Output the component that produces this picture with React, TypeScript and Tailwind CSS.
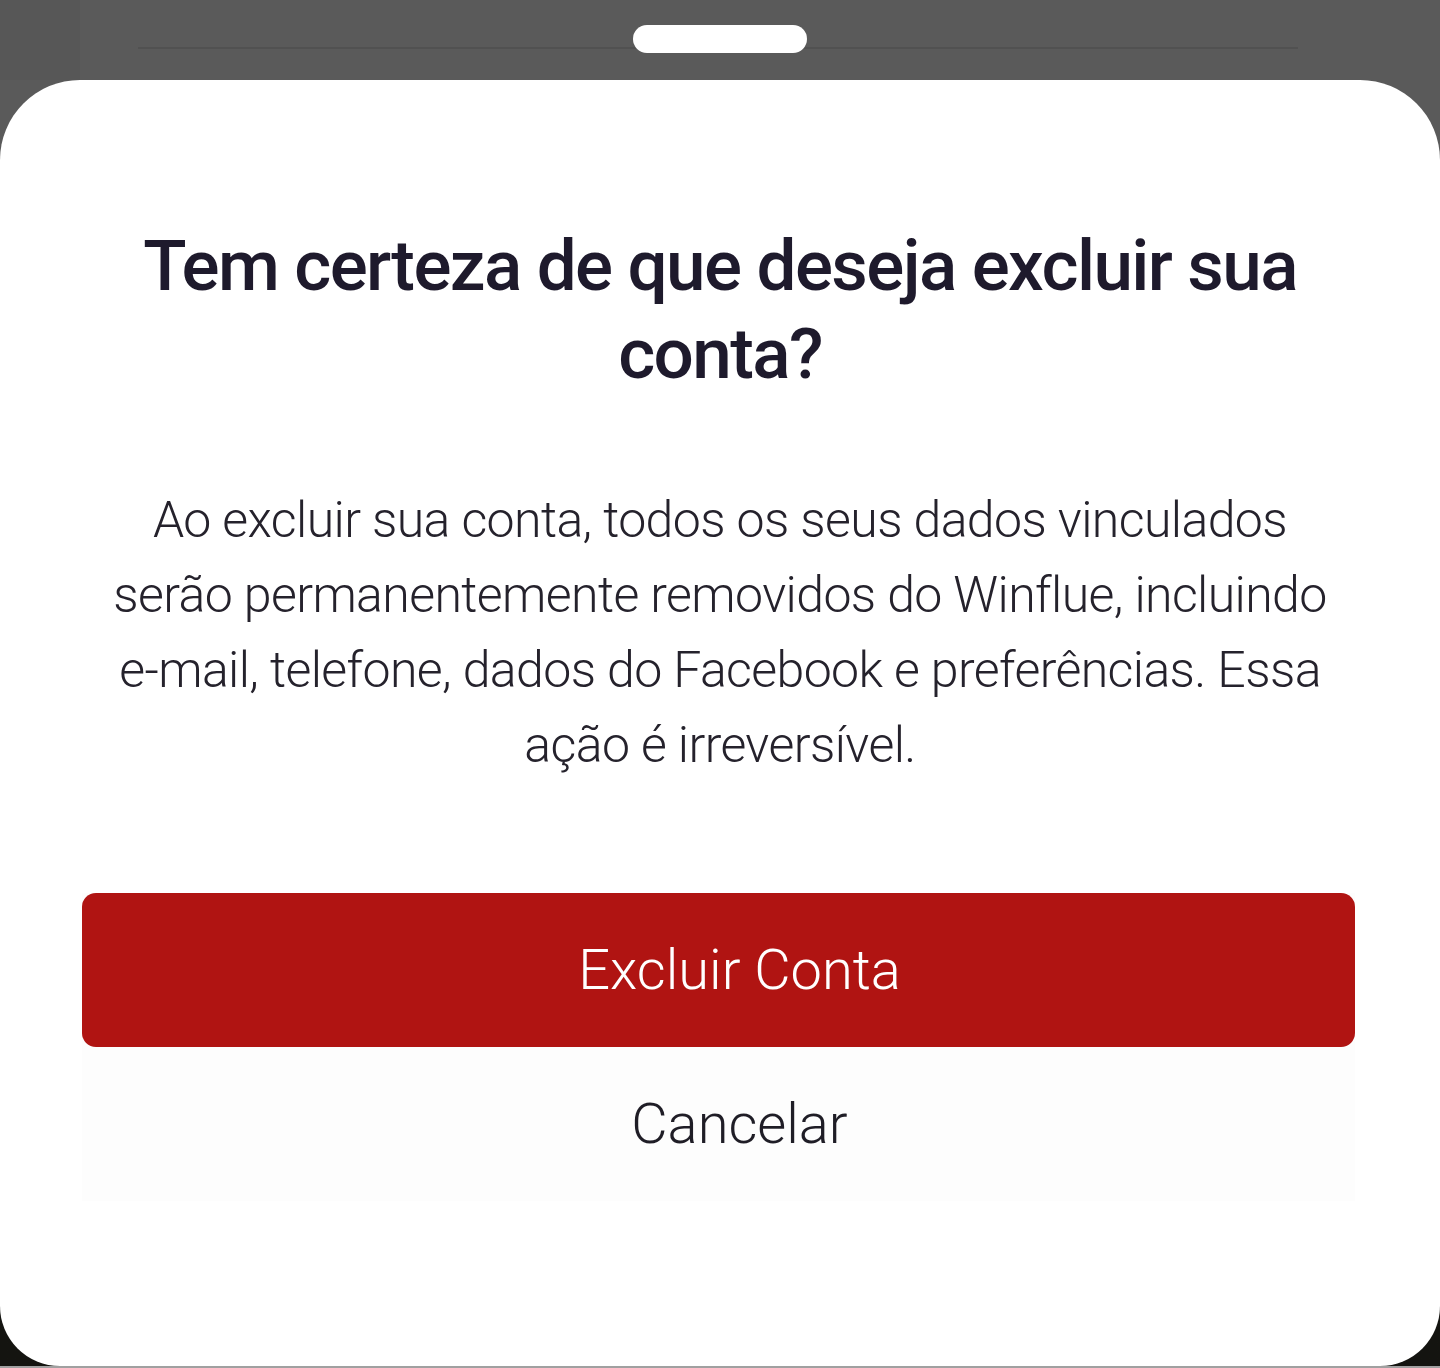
export default function App() {
  return (
    <div className="flex h-[1368px] w-[1440px] flex-col bg-[#5a5a5a] font-['Roboto',sans-serif]">
      {/* top strip behind the sheet */}
      <div className="relative flex h-[80px] shrink-0 justify-center pt-[25px]">
        <div className="absolute left-0 top-0 h-full w-[80px] bg-[#575757]" />
        <div className="absolute left-[138px] right-[142px] top-[47px] h-[2px] bg-[#515151]" />
        <div className="relative h-[28px] w-[174px] rounded-full bg-white" />
      </div>

      <div className="flex flex-1 flex-col bg-linear-to-b from-[#5a5a5a] from-50% to-[#141410] to-50%">
        <div className="flex flex-1 flex-col items-center rounded-t-[80px] rounded-b-[60px] bg-white pl-[82px] pr-[85px] pt-[142px]">
          <h1 className="whitespace-nowrap pl-[3px] text-center text-[71px] font-medium leading-[88px] tracking-[-1.6px] text-[#1e1a2c]">
            Tem certeza de que deseja excluir sua
            <br />
            conta?
          </h1>

          <p className="mt-[85px] whitespace-nowrap pl-[3px] text-center text-[50px] font-light leading-[75px] tracking-[-0.6px] text-[#25222c]">
            Ao excluir sua conta, todos os seus dados vinculados
            <br />
            serão permanentemente removidos do Winflue, incluindo
            <br />
            e-mail, telefone, dados do Facebook e preferências. Essa
            <br />
            ação é irreversível.
          </p>

          <div className="mt-[110px] flex w-full flex-col items-center bg-[#fdfdfd]">
            <button className="flex h-[154px] w-full items-center justify-center rounded-[14px] bg-[#b01412] pl-[42px] text-[56px] font-light text-white">
              Excluir Conta
            </button>
            <button className="flex h-[154px] w-full items-center justify-center pl-[42px] text-[56px] font-light text-[#1f1d26]">
              Cancelar
            </button>
          </div>
        </div>
      </div>
      <div className="h-[2px] shrink-0 bg-[#a0a0a0]" />
    </div>
  );
}
